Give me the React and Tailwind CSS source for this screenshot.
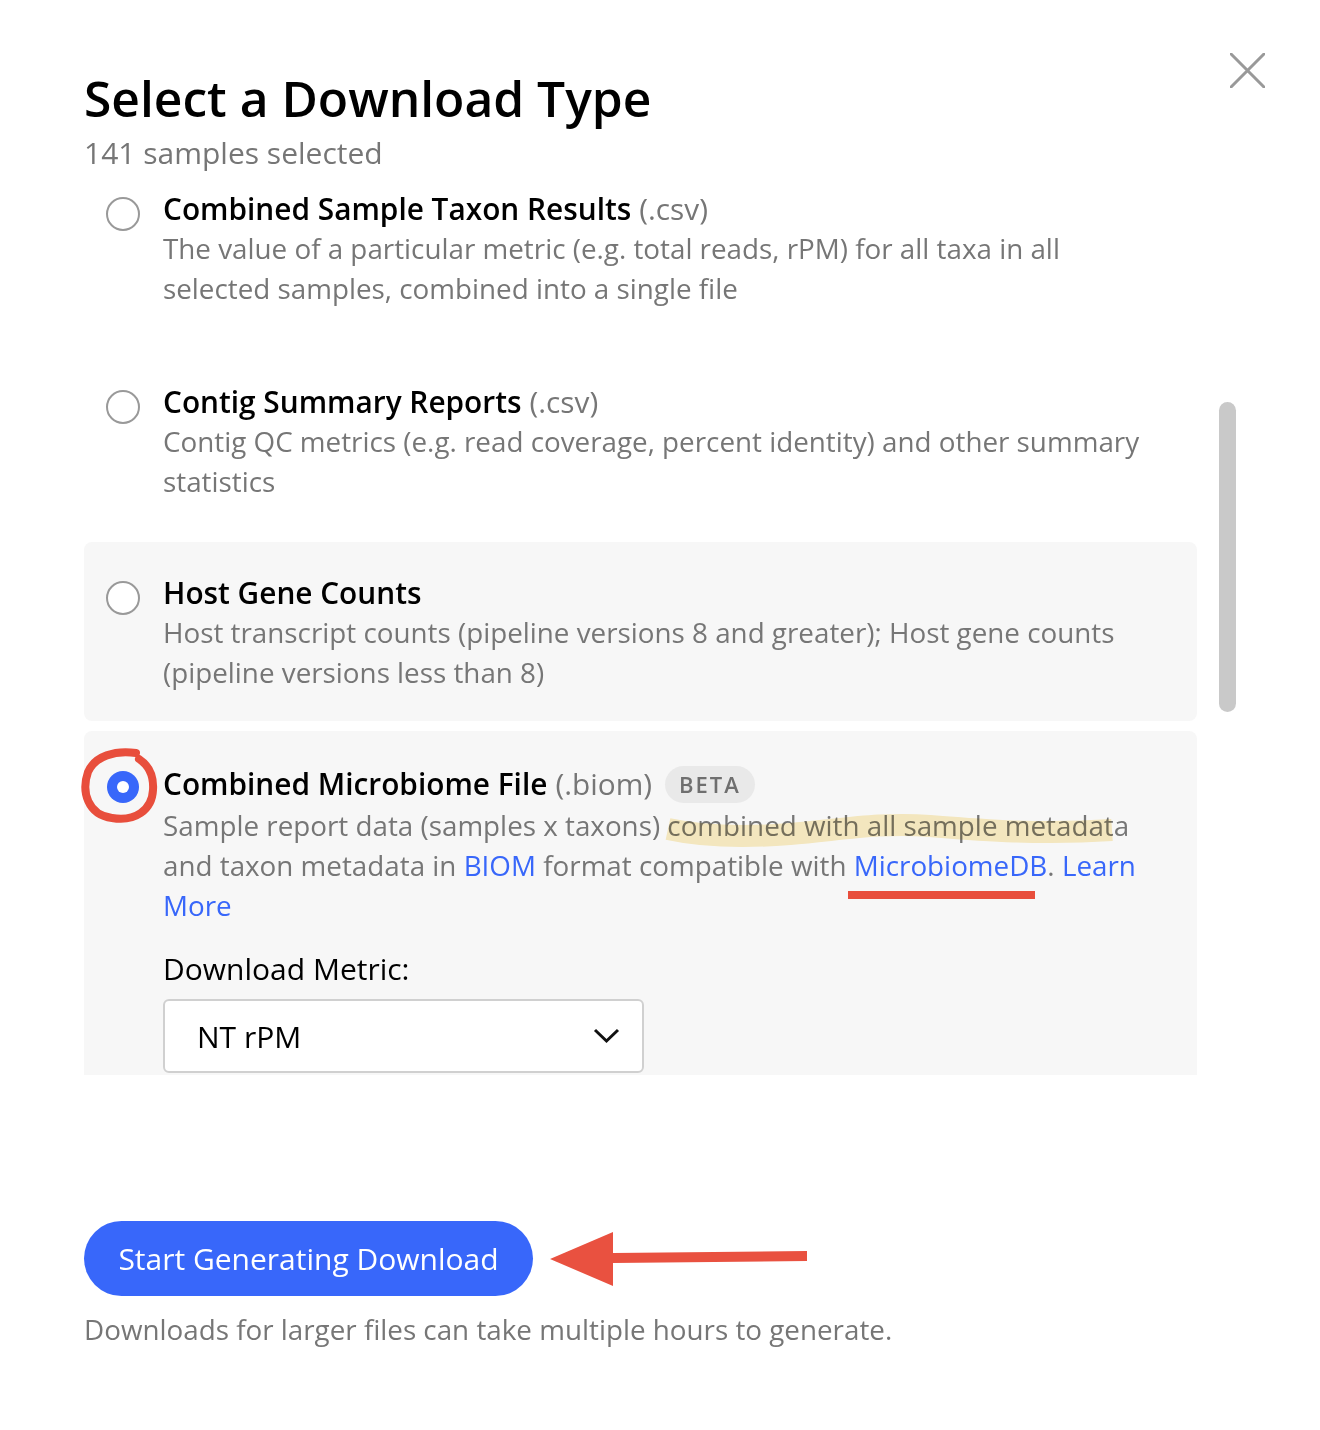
import React from "react";

const Radio = ({ selected }) =>
  selected ? (
    <div className="w-[34px] shrink-0 flex justify-center pt-[8px]">
      <div className="w-[32px] h-[32px] rounded-full bg-[#3867fa] flex items-center justify-center">
        <div className="w-[12px] h-[12px] rounded-full bg-white" />
      </div>
    </div>
  ) : (
    <div className="mt-[7px] w-[34px] h-[34px] shrink-0 rounded-full border-2 border-[#999999] bg-white" />
  );

const Option = ({ title, ext, desc, shaded, selected, className, titleExtra, children }) => (
  <div className={`flex items-start rounded-[8px] pl-[22px] pr-[36px] ${shaded ? "bg-[#f7f7f7]" : ""} ${className}`}>
    <Radio selected={selected} />
    <div className="ml-[23px] flex-1">
      <div className={`flex items-center ${titleExtra ? "h-[42px]" : "h-[38px]"}`}>
        <span className="text-[29.8px] leading-[38px] font-semibold text-black">{title}</span>
        {ext && <span className="text-[29.8px] leading-[38px] text-[#767676] ml-[8px]">{ext}</span>}
        {titleExtra}
      </div>
      <div className="text-[27.8px] leading-[40px] text-[#767676]">{desc}</div>
      {children}
    </div>
  </div>
);

export default function App() {
  return (
    <div className="relative w-[1320px] h-[1430px] bg-white overflow-hidden font-['Open_Sans',sans-serif]">
      <button className="absolute top-[53px] right-[55px] w-[35px] h-[35px]">
        <svg width="35" height="35" viewBox="0 0 35 35">
          <path d="M1 1 L34 34 M34 1 L1 34" stroke="#999999" strokeWidth="3" strokeLinecap="round" />
        </svg>
      </button>

      <div className="pl-[84px] pt-[68px]">
        <h1 className="text-[49.7px] leading-[60px] font-semibold text-black">Select a Download Type</h1>
        <p className="mt-[5px] text-[30px] leading-[40px] text-[#767676]">141 samples selected</p>

        <div className="flex h-[902px] overflow-hidden">
          <div className="w-[1113px] shrink-0">
            <Option
              className="pt-[17px] pb-[29px] mb-[14px]"
              title="Combined Sample Taxon Results"
              ext="(.csv)"
              desc="The value of a particular metric (e.g. total reads, rPM) for all taxa in all selected samples, combined into a single file"
            />
            <Option
              className="pt-[32px] pb-[29px] mb-[12px]"
              title="Contig Summary Reports"
              ext="(.csv)"
              desc="Contig QC metrics (e.g. read coverage, percent identity) and other summary statistics"
            />
            <Option
              shaded
              className="pt-[32px] pb-[29px] mb-[10px]"
              title="Host Gene Counts"
              desc="Host transcript counts (pipeline versions 8 and greater); Host gene counts (pipeline versions less than 8)"
            />
            <Option
              shaded
              selected
              className="pt-[32px] pb-[80px]"
              title="Combined Microbiome File"
              ext="(.biom)"
              titleExtra={
                <span className="ml-[13px] h-[37px] px-[14px] rounded-full bg-[#e9e9e9] flex items-center text-[22px] font-semibold tracking-[2px] text-[#6f6f6f]">
                  BETA
                </span>
              }
              desc={
                <>
                  Sample report data (samples x taxons) combined with all sample metadata and taxon metadata in{" "}
                  <span className="text-[#3867fa]">BIOM</span> format compatible with{" "}
                  <span className="text-[#3867fa]">MicrobiomeDB</span>.{" "}
                  <span className="text-[#3867fa]">Learn More</span>
                </>
              }
            >
              <div className="mt-[24px] text-[30px] leading-[40px] text-black">Download Metric:</div>
              <div className="mt-[10px] w-[481px] h-[74px] border-2 border-[#d0d0d0] rounded-[6px] bg-white flex items-center justify-between pl-[32px] pr-[22px]">
                <span className="text-[30px] text-black">NT rPM</span>
                <svg width="27" height="16" viewBox="0 0 27 16">
                  <path d="M2 2 L13.5 13 L25 2" fill="none" stroke="#111" strokeWidth="3" />
                </svg>
              </div>
            </Option>
          </div>
          <div className="ml-[22px] w-[17px] pt-[229px]">
            <div className="h-[310px] rounded-full bg-[#c9c9c9]" />
          </div>
        </div>

        <button className="mt-[146px] h-[75px] w-[449px] rounded-full bg-[#3867fa] text-white text-[30px] flex items-center justify-center">
          Start Generating Download
        </button>
        <p className="mt-[13px] text-[27.8px] leading-[40px] text-[#767676]">
          Downloads for larger files can take multiple hours to generate.
        </p>
      </div>

      {/* Annotations */}
      <svg className="absolute inset-0 pointer-events-none mix-blend-multiply" width="1320" height="1430">
        <path
          d="M668 829 C 700 836, 740 838, 790 834 C 840 830, 880 822, 930 826 C 980 830, 1040 835, 1112 830"
          fill="none"
          stroke="#fbeec4"
          strokeWidth="22"
        />
      </svg>
      <svg className="absolute inset-0 pointer-events-none" width="1320" height="1430">
        <path
          d="M136 753 C 115 750, 95 756, 88 772 C 81 792, 88 815, 112 818 C 135 822, 152 810, 153 790 C 154 775, 148 765, 139 759"
          fill="none"
          stroke="#e84e3c"
          strokeWidth="8"
          strokeLinecap="round"
        />
        <rect x="848" y="891" width="187" height="8" fill="#e84e3c" />
        <path d="M550 1259 L613 1232 L613 1253 L807 1251 L807 1261 L613 1263 L613 1286 Z" fill="#e95140" />
      </svg>
    </div>
  );
}
